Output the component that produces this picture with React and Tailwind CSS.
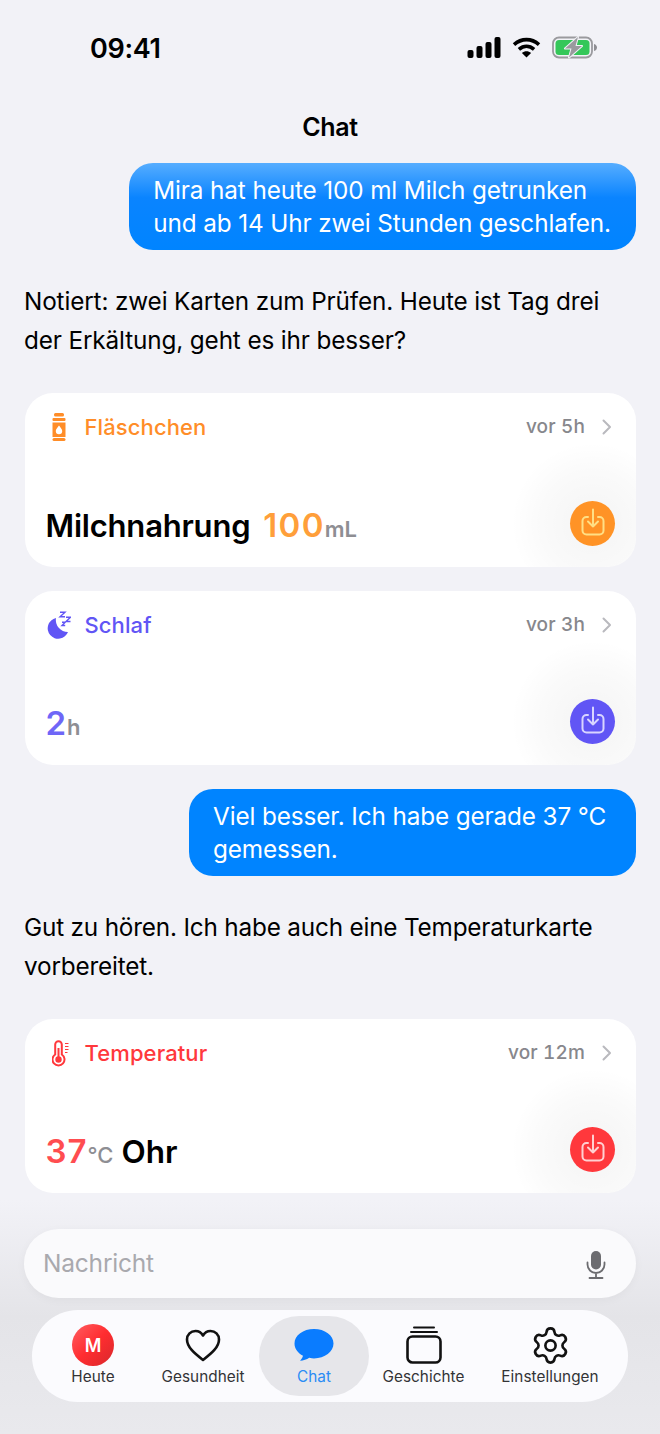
import { Settings } from 'lucide-react';

const font = { fontFamily: 'Inter, "Noto Sans", sans-serif' };

function StatusBar() {
  return (
    <div className="h-[98px] shrink-0 flex items-start justify-between pl-[90px] pr-[62px] pt-[33px]">
      <span className="text-[27px] leading-[32px] font-semibold text-black tracking-[-0.3px]">09:41</span>
      <div className="flex items-center gap-[11px] pt-[3px]">
        <svg width="34" height="21" viewBox="0 0 34 21" fill="#000">
          <rect x="0.5" y="13" width="6" height="8" rx="2" />
          <rect x="9.5" y="9" width="6" height="12" rx="2" />
          <rect x="18.5" y="5" width="6" height="16" rx="2" />
          <rect x="27.5" y="0" width="6" height="21" rx="2" />
        </svg>
        <svg width="29" height="21" viewBox="0 0 29 21" fill="none" stroke="#000" strokeWidth="3.6">
          <path d="M2 7.6C9.5 .9 19.5 .9 27 7.6" />
          <path d="M6.9 12.4C11.6 8.4 17.4 8.4 22.1 12.4" />
          <path d="M14.5 20.5L9.9 15.9C12.6 13.8 16.4 13.8 19.1 15.9Z" fill="#000" stroke="none" />
        </svg>
        <svg width="46" height="23" viewBox="0 0 46 23" fill="none">
          <rect x="1" y="1.5" width="39" height="20" rx="6" stroke="#9a9a9e" strokeWidth="1.8" />
          <rect x="3.5" y="4" width="34" height="15" rx="3.5" fill="#34c759" />
          <path d="M42 8v7c2-.5 3-2 3-3.500S44 8.500 42 8Z" fill="#8e8e93" />
          <path d="M26 1L13 12.500h6.500L17 21.500l13-11.500h-6.500Z" fill="#9a9a9e" stroke="#f2f2f7" strokeWidth="2" paintOrder="stroke" strokeLinejoin="round" />
        </svg>
      </div>
    </div>
  );
}

function Bubble({ lines, className }) {
  return (
    <div className={`self-end rounded-[24px] text-white text-[24.3px] leading-[33px] pl-[24px] pr-[25px] pt-[11px] pb-[10px] tracking-[-0.12px] whitespace-nowrap ${className}`}>
      {lines.map((l) => <div key={l}>{l}</div>)}
    </div>
  );
}

function SaveIcon() {
  return (
    <svg width="24" height="28" viewBox="0 0 24 28" fill="none" stroke="currentColor" strokeWidth="2" strokeLinecap="round" strokeLinejoin="round">
      <path d="M7 9H5.500a4 4 0 0 0-4 4v9.500a4 4 0 0 0 4 4h13a4 4 0 0 0 4-4V13a4 4 0 0 0-4-4H17" />
      <path d="M12 1.500v17M7 13.500l5 5 5-5" />
    </svg>
  );
}

function Card({ icon, title, color, time, saveBg, saveInk, children, className }) {
  return (
    <div className={`rounded-[28px] bg-white relative overflow-hidden flex flex-col pl-[21px] pr-[21px] ${className}`}>
      <div className="h-[68px] shrink-0 flex items-center">
        <div className="w-[39.500px] -ml-[1px] flex items-center">{icon}</div>
        <span className="text-[22px] font-[550] tracking-[0.1px]" style={{ color }}>{title}</span>
        <span className="ml-auto text-[19px] text-[#87878c] font-medium tabular-nums tracking-[0.15px]">{time}</span>
        <svg width="10" height="16" viewBox="0 0 10 16" fill="none" stroke="#b9b9be" strokeWidth="2" strokeLinecap="round" strokeLinejoin="round" className="ml-[17px] mr-[3px]">
          <path d="M1.500 1.500L8 8l-6.500 6.500" />
        </svg>
      </div>
      <div className="flex-1 flex items-end justify-between pb-[21px]">
        <div className="flex items-baseline leading-none whitespace-nowrap pb-[4px] -ml-[0.5px]">{children}</div>
        <div className="relative w-[45px] h-[45px]">
          <div className="absolute -inset-[60px] rounded-full bg-[radial-gradient(circle,_rgba(0,0,0,0.045)_0%,_rgba(0,0,0,0.02)_45%,_rgba(0,0,0,0)_70%)]"></div>
          <div className="absolute inset-0 rounded-full flex items-center justify-center pb-[3px]" style={{ background: saveBg, color: saveInk }}>
            <SaveIcon />
          </div>
        </div>
      </div>
    </div>
  );
}

function TabItem({ icon, label, active, className }) {
  return (
    <div className={`h-[80px] flex flex-col items-center pt-[5px] rounded-[40px] ${active ? 'bg-[#e6e6ea]' : ''} ${className}`}>
      <div className="h-[48px] flex items-center justify-center">{icon}</div>
      <span className={`text-[15.300px] leading-[18px] tracking-[0.05px] -mt-[1px] whitespace-nowrap ${active ? 'text-[#2a8cf5]' : 'text-[#333336]'}`}>{label}</span>
    </div>
  );
}

export default function App() {
  return (
    <div className="w-[660px] h-[1434px] bg-[#f2f2f7] overflow-hidden flex flex-col" style={font}>
      <StatusBar />
      <div className="h-[65px] shrink-0 text-center text-[25px] leading-[58px] font-semibold text-black tracking-[-0.3px]">Chat</div>

      <div className="flex flex-col pl-[25px] pr-[24px]">
        <Bubble
          lines={['Mira hat heute 100 ml Milch getrunken', 'und ab 14 Uhr zwei Stunden geschlafen.']}
          className="bg-[linear-gradient(180deg,_#56adff_0%,_#0a84ff_40%,_#0084ff_100%)]"
        />
        <p className="mt-[32px] -ml-[1px] text-[24.3px] leading-[39px] text-black tracking-[-0.13px] whitespace-nowrap">
          Notiert: zwei Karten zum Prüfen. Heute ist Tag drei<br />der Erkältung, geht es ihr besser?
        </p>

        <Card
          className="mt-[33px] h-[174px]"
          title="Fläschchen"
          color="#ff8d28"
          time="vor 5h"
          saveBg="#ff9326"
          saveInk="#ffdf85"
          icon={
            <svg width="14" height="28" viewBox="0 0 14 28" fill="#ff8d28" className="ml-[7px]">
              <rect x="2" y="0" width="10" height="3.500" rx="1.500" />
              <rect x="0.5" y="5" width="13" height="3" rx="1" />
              <path d="M.5 9.500h13V24H.5ZM7 12.500c-2 2.500-3.200 4-3.200 5.500a3.200 3.200 0 0 0 6.400 0C10.200 16.500 9 15 7 12.500Z" fillRule="evenodd" />
              <rect x="0.5" y="25" width="13" height="3" rx="1.500" />
            </svg>
          }
        >
          <span className="text-[31px] font-semibold text-black tracking-[-0.2px]">Milchnahrung</span>
          <span className="ml-[13px] text-[33px] font-semibold tracking-[1.300px] text-[#ff9f3a]">100</span>
          <span className="text-[22px] font-semibold text-[#8e8e93]">mL</span>
        </Card>

        <Card
          className="mt-[24px] h-[174px]"
          title="Schlaf"
          color="#6155f5"
          time="vor 3h"
          saveBg="#6155f5"
          saveInk="#d9d5ff"
          icon={
            <svg width="24" height="28" viewBox="0 0 24 28" fill="#6155f5" className="ml-[2px]">
              <path d="M9 7A10.500 10.500 0 1 0 21 21 12 12 0 0 1 9 7Z" />
              <path d="M13 1.200h5L13 5.800h5M19 6.200h4.500L19 10.500h4.500M15 11.200h3.200L15 14.500h3.200" fill="none" stroke="#6155f5" strokeWidth="1.400" />
            </svg>
          }
        >
          <span className="text-[33px] font-semibold tracking-[1px] text-[#6f66f7]">2</span>
          <span className="text-[22px] font-semibold text-[#8e8e93]">h</span>
        </Card>

        <Bubble
          lines={['Viel besser. Ich habe gerade 37 °C', 'gemessen.']}
          className="mt-[24px] w-[447px] bg-[#0084ff]"
        />
        <p className="mt-[32px] -ml-[1px] text-[24.3px] leading-[39px] text-black tracking-[-0.18px] whitespace-nowrap">
          Gut zu hören. Ich habe auch eine Temperaturkarte<br />vorbereitet.
        </p>

        <Card
          className="mt-[33px] h-[173.500px]"
          title="Temperatur"
          color="#ff383c"
          time="vor 12m"
          saveBg="#ff383c"
          saveInk="#ffd0d1"
          icon={
            <svg width="17" height="27" viewBox="0 0 17 27" fill="none" stroke="#ff383c" className="ml-[7px]">
              <path d="M3.200 14.500V4.500a3.300 3.300 0 0 1 6.600 0v10a6 6 0 1 1-6.600 0Z" strokeWidth="2" />
              <circle cx="6.500" cy="19.500" r="3.200" fill="#ff383c" stroke="none" />
              <path d="M6.500 8v10" strokeWidth="2" />
              <path d="M13 3.500h3.500M13 6.500h3.500M13 9.500h3.500M13 12.500h2.500" strokeWidth="1.200" />
            </svg>
          }
        >
          <span className="text-[33px] font-semibold tracking-[1px] text-[#ff4d50]">37</span>
          <span className="text-[22px] font-medium text-[#8e8e93]">°C</span>
          <span className="ml-[8px] text-[31.500px] font-semibold text-black">Ohr</span>
        </Card>
      </div>

      <div className="flex-1 mt-[7.500px] pt-[29px] bg-[linear-gradient(180deg,_#f2f2f7_0%,_#e4e4e8_50%,_#e9e9ed_100%)] flex flex-col">
        <div className="mx-[24px] h-[69px] rounded-[35px] bg-[#fafafc] flex items-center justify-between pl-[19px] pr-[30px] shadow-[0_2px_10px_rgba(0,0,0,0.04)]">
          <span className="text-[24.5px] text-[#a9a9ae] tracking-[-0.2px] -mt-[1px]">Nachricht</span>
          <svg width="20" height="28" viewBox="0 0 20 28" fill="none" className="mt-[2px]">
            <rect x="5" y="0" width="10" height="18.500" rx="5" fill="#6c6c70" />
            <path d="M1.500 11.500v2a8.500 8.500 0 0 0 17 0v-2M10 22v5M3.500 27h13" stroke="#6c6c70" strokeWidth="1.800" strokeLinecap="round" />
          </svg>
        </div>

        <div className="mt-[12px] mx-[32px] h-[92px] rounded-[46px] bg-[#fbfbfe] flex items-center pl-[6px] pr-[6px]">
          <TabItem
            className="w-[110px]"
            label="Heute"
            icon={
              <div className="w-[42px] h-[42px] rounded-full bg-[linear-gradient(135deg,_#ff5f63_0%,_#ff2d30_50%,_#d8282c_100%)] flex items-center justify-center text-white text-[18px] font-semibold">M</div>
            }
          />
          <TabItem
            className="w-[110px]"
            label="Gesundheit"
            icon={
              <svg width="36" height="33" viewBox="0 0 36 33" fill="none" stroke="#111" strokeWidth="2.600" strokeLinejoin="round">
                <path d="M18 31C9 24 2 18 2 10.500 2 5.500 5.800 2 10.500 2 13.800 2 16.500 3.800 18 6.500 19.500 3.800 22.200 2 25.500 2 30.200 2 34 5.500 34 10.500 34 18 27 24 18 31Z" />
              </svg>
            }
          />
          <TabItem
            active
            className="w-[110px] ml-[1px]"
            label="Chat"
            icon={
              <svg width="40" height="34" viewBox="0 0 40 34" fill="#0a7cff">
                <path d="M20 1C9.200 1 .500 7.300.500 15.500c0 5.200 3.400 9.600 8.500 12.200-.5 2-1.800 3.800-3 5 3.400 0 6.800-1.300 9.200-2.900 1.800.4 3.500.6 4.800.6 10.800 0 19.500-6.700 19.500-14.900S30.800 1 20 1Z" />
              </svg>
            }
          />
          <TabItem
            className="w-[109px]"
            label="Geschichte"
            icon={
              <svg width="36" height="38" viewBox="0 0 36 38" fill="none" stroke="#111" strokeLinecap="round">
                <path d="M8 1.500h20" strokeWidth="2" />
                <path d="M5 6h26" strokeWidth="2" />
                <rect x="1.500" y="10.500" width="33" height="26" rx="5" strokeWidth="2.600" />
              </svg>
            }
          />
          <TabItem
            className="flex-1"
            label="Einstellungen"
            icon={<Settings size={41} strokeWidth={1.55} color="#111" />}
          />
        </div>
      </div>
    </div>
  );
}
